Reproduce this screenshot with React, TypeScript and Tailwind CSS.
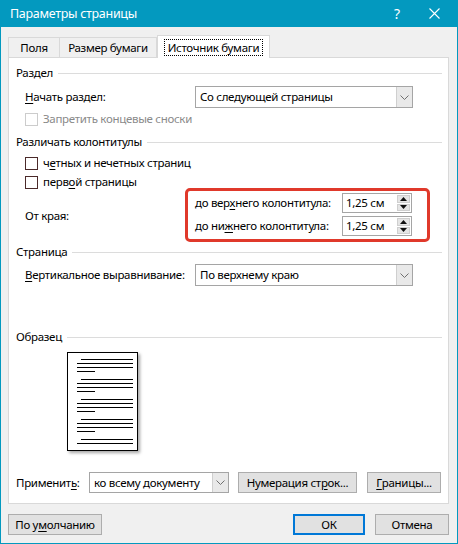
import React from "react";

const font = { fontFamily: '"Noto Sans", "Open Sans", sans-serif' };

const U = ({ children }: { children: React.ReactNode }) => <span className="underline underline-offset-2">{children}</span>;

const Heading = ({ title }: { title: string }) => (
  <div className="flex items-center h-[16px] pl-[7px] pr-[6px] gap-[5px]">
    <span className="whitespace-nowrap">{title}</span>
    <div className="flex-1 h-px bg-[#dcdcdc]" />
  </div>
);

const Chevron = () => (
  <svg width="9" height="5" viewBox="0 0 9 5">
    <path d="M0.5 0.5 L4.5 4.5 L8.5 0.5" fill="none" stroke="#707070" strokeWidth="1" />
  </svg>
);

const Select = ({ value, className }: { value: string; className: string }) => (
  <div className={`flex items-stretch bg-white border border-[#a5a5a5] ${className}`}>
    <div className="flex-1 flex items-center pl-[4px] whitespace-nowrap overflow-hidden">{value}</div>
    <div className="w-[16px] flex items-center justify-center bg-[#e9e9e9] border-l border-[#cfcfcf]">
      <Chevron />
    </div>
  </div>
);

const Checkbox = ({ disabled, children }: { disabled?: boolean; children: React.ReactNode }) => (
  <div className={`flex items-center h-[16px] pl-[16px] gap-[5px] ${disabled ? "text-[#8a8a8a]" : ""}`}>
    <div className={`w-[13px] h-[13px] bg-white border ${disabled ? "border-[#cccccc]" : "border-[#4b2a2a]"}`} />
    <span className="whitespace-nowrap">{children}</span>
  </div>
);

const Spin = ({ value }: { value: string }) => (
  <div className="flex w-[70px] h-[20px] bg-white border border-[#a5a5a5]">
    <div className="flex-1 flex items-center pl-[3px]">{value}</div>
    <div className="w-[15px] flex flex-col gap-px p-px">
      <div className="flex-1 bg-[#e5e5e5] border border-[#cfcfcf] flex items-center justify-center">
        <svg width="7" height="4" viewBox="0 0 7 4"><path d="M0 4 L3.5 0 L7 4 Z" fill="#111" /></svg>
      </div>
      <div className="flex-1 bg-[#e5e5e5] border border-[#cfcfcf] flex items-center justify-center">
        <svg width="7" height="4" viewBox="0 0 7 4"><path d="M0 0 L3.5 4 L7 0 Z" fill="#111" /></svg>
      </div>
    </div>
  </div>
);

const Button = ({ children, className, primary }: { children: React.ReactNode; className: string; primary?: boolean }) => (
  <div
    className={`flex items-center justify-center bg-[#e1e1e1] whitespace-nowrap ${
      primary ? "border-2 border-[#0078d7]" : "border border-[#adadad]"
    } ${className}`}
  >
    {children}
  </div>
);

const Preview = () => {
  const groups = [7, 27, 47, 67, 87];
  return (
    <div className="ml-[58px] mt-[7px] w-[71px] h-[99px] bg-white border border-black shadow-[2px_2px_3px_rgba(0,0,0,0.35)]">
      <svg width="69" height="97" viewBox="0 0 69 97">
        {groups.map((y, i) => (
          <g key={i} stroke="#000" strokeWidth="1">
            <line x1="13" x2="65" y1={y - 0.5} y2={y - 0.5} />
            <line x1="9" x2="65" y1={y + 3.5} y2={y + 3.5} />
            {i < 4 && <line x1="9" x2="65" y1={y + 7.5} y2={y + 7.5} />}
            {i < 4 && <line x1="9" x2="27" y1={y + 11.5} y2={y + 11.5} />}
          </g>
        ))}
      </svg>
    </div>
  );
};

export default function App() {
  return (
    <div
      style={font}
      className="w-[458px] h-[544px] bg-[#0399bf] flex flex-col px-px pb-px text-[11.5px] tracking-[-0.3px] leading-[16px] text-black"
    >
      {/* title bar */}
      <div className="h-[27px] flex items-center text-white">
        <div className="pl-[9px] text-[12.5px] tracking-[-0.3px] flex-1">Параметры страницы</div>
        <div className="w-[28px] text-center text-[14px]">?</div>
        <div className="w-[46px] flex items-center justify-center">
          <svg width="11" height="11" viewBox="0 0 11 11">
            <path d="M0.5 0.5 L10.5 10.5 M10.5 0.5 L0.5 10.5" stroke="#fff" strokeWidth="1.1" />
          </svg>
        </div>
      </div>

      {/* body */}
      <div className="flex-1 bg-[#f0f0f0] pl-[7px] pr-[8px] pt-[8px] flex flex-col">
        {/* tabs */}
        <div className="flex items-end h-[22px] relative z-10">
          <div className="h-[20px] w-[52px] flex items-center justify-center bg-[#f0f0f0] border border-b-0 border-[#d9d9d9]">Поля</div>
          <div className="h-[20px] w-[97px] flex items-center justify-center bg-[#f0f0f0] border border-l-0 border-b-0 border-[#d9d9d9]">Размер бумаги</div>
          <div className="h-[23px] -mb-px w-[113px] flex items-center justify-center bg-white border border-b-0 border-[#d9d9d9]">
            <span className="border border-dotted border-black px-[3px] leading-[15px]">Источник бумаги</span>
          </div>
        </div>

        {/* panel */}
        <div className="h-[447px] bg-white border border-[#d9d9d9] flex flex-col">
          <div className="mt-[7px]">
            <Heading title="Раздел" />
          </div>
          <div className="mt-[5px] flex items-center pl-[16px]">
            <div className="w-[170px]"><U>Н</U>ачать раздел:</div>
            <Select value="Со следующей страницы" className="w-[218px] h-[22px]" />
          </div>
          <div className="mt-[3px]">
            <Checkbox disabled>Запретить концевые сноски</Checkbox>
          </div>

          <div className="mt-[7px]">
            <Heading title="Различать колонтитулы" />
          </div>
          <div className="mt-[5px]">
            <Checkbox>
              ч<U>е</U>тных и нечетных страниц
            </Checkbox>
          </div>
          <div className="mt-[3px]">
            <Checkbox>
              перв<U>о</U>й страницы
            </Checkbox>
          </div>
          <div className="-mt-[2px] flex items-center pl-[16px]">
            <div className="w-[160px] pt-[1px]">От края:</div>
            <div className="w-[245px] h-[54px] border-[3px] border-[#e0392b] rounded-[5px] pl-[7px] pr-[15px] pt-[2px] flex flex-col gap-[3px]">
              <div className="flex items-center justify-between">
                <span className="whitespace-nowrap">до вер<U>х</U>него колонтитула:</span>
                <Spin value="1,25 см" />
              </div>
              <div className="flex items-center justify-between">
                <span className="whitespace-nowrap">до ни<U>ж</U>него колонтитула:</span>
                <Spin value="1,25 см" />
              </div>
            </div>
          </div>

          <div className="mt-[2px]">
            <Heading title="Страница" />
          </div>
          <div className="mt-[4px] flex items-center pl-[16px]">
            <div className="w-[170px] whitespace-nowrap"><U>В</U>ертикальное выравнивание:</div>
            <Select value="По верхнему краю" className="w-[218px] h-[22px]" />
          </div>

          <div className="mt-[43px]">
            <Heading title="Образец" />
          </div>
          <Preview />

          <div className="mt-[21px] flex items-center pl-[7px]">
            <div className="w-[73px] whitespace-nowrap">Применит<U>ь</U>:</div>
            <Select value="ко всему документу" className="w-[140px] h-[21px]" />
            <Button className="ml-[9px] w-[119px] h-[21px]">
              Нумерация ст<U>р</U>ок...
            </Button>
            <Button className="ml-[10px] w-[74px] h-[21px]">
              <U>Г</U>раницы...
            </Button>
          </div>
        </div>

        {/* bottom buttons */}
        <div className="mt-[10px] flex items-center">
          <Button className="w-[94px] h-[21px]">
            По у<U>м</U>олчанию
          </Button>
          <div className="flex-1" />
          <Button primary className="w-[72px] h-[21px]">ОК</Button>
          <Button className="ml-[10px] w-[74px] h-[21px]">Отмена</Button>
        </div>
      </div>
    </div>
  );
}
